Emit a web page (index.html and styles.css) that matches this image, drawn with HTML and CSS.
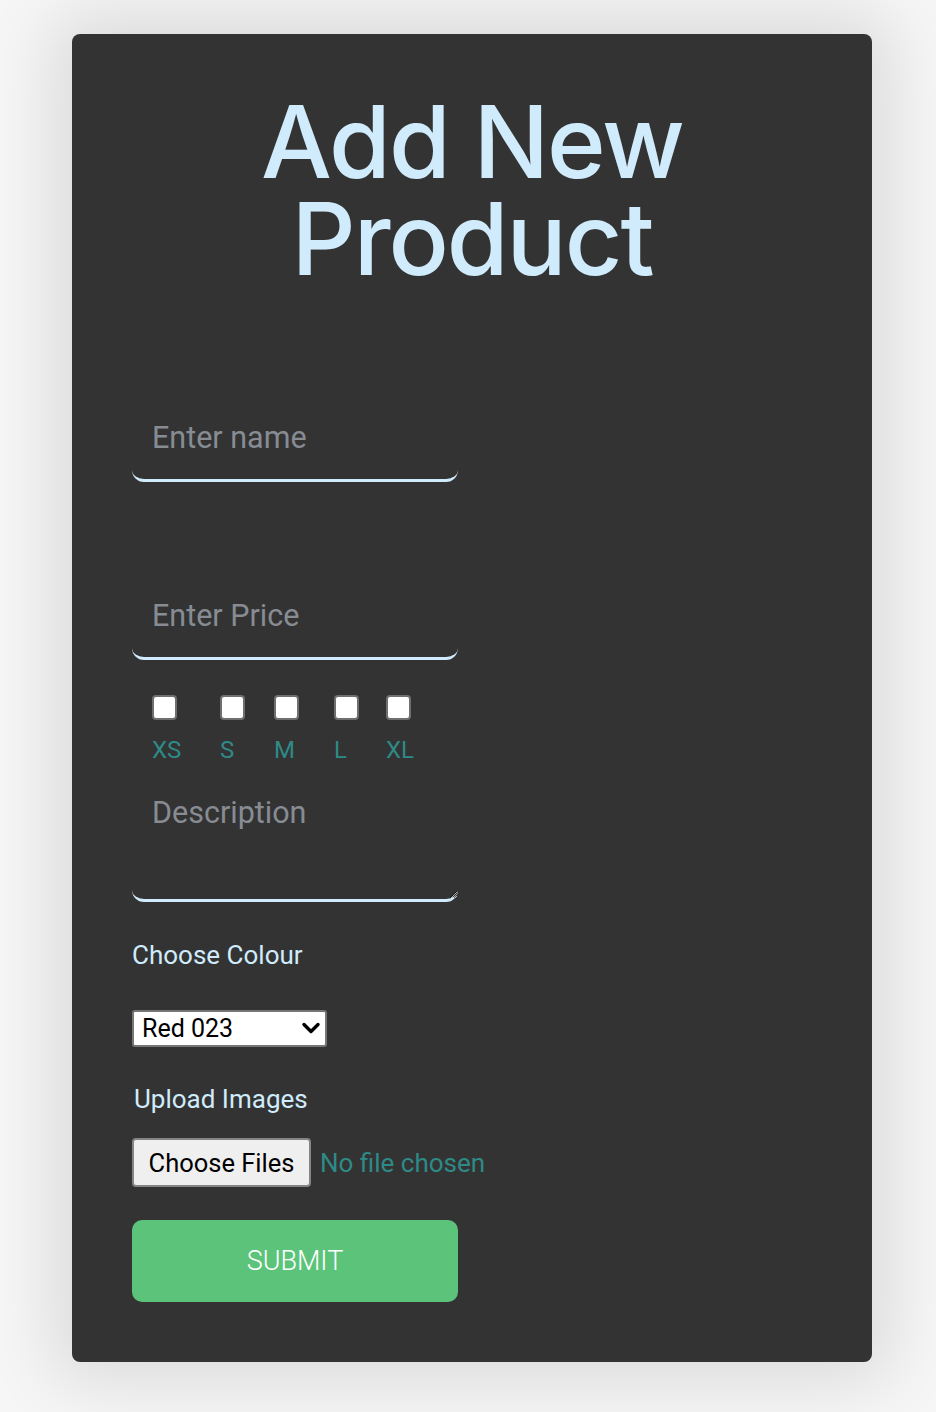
FILE: index.html
```html
<!DOCTYPE html>
<html lang="en">
<head>
<meta charset="utf-8">
<title>Add New Product</title>
<link rel="stylesheet" href="styles.css">
</head>
<body>
<main class="card">
  <h1 class="title">Add New<br>Product</h1>
  <form class="form">
    <input class="field field-name" type="text" placeholder="Enter name">
    <input class="field field-price" type="text" placeholder="Enter Price">
    <div class="sizes">
      <label class="size size-xs"><input class="check" type="checkbox"><span>XS</span></label>
      <label class="size size-s"><input class="check" type="checkbox"><span>S</span></label>
      <label class="size size-m"><input class="check" type="checkbox"><span>M</span></label>
      <label class="size size-l"><input class="check" type="checkbox"><span>L</span></label>
      <label class="size size-xl"><input class="check" type="checkbox"><span>XL</span></label>
    </div>
    <textarea class="field field-desc" placeholder="Description"></textarea>
    <label class="label label-colour">Choose Colour</label>
    <div class="select-wrap">
      <select class="select">
        <option>Red 023</option>
        <option>Blue 011</option>
        <option>Green 042</option>
      </select>
      <svg class="chevron" width="20" height="14" viewBox="0 0 20 14"><path d="M3 3.5 L10 10.5 L17 3.5" fill="none" stroke="#000" stroke-width="3.4" stroke-linecap="round" stroke-linejoin="round"/></svg>
    </div>
    <label class="label label-upload">Upload Images</label>
    <div class="file-row">
      <button type="button" class="file-btn">Choose Files</button>
      <span class="file-status">No file chosen</span>
    </div>
    <button type="button" class="submit">SUBMIT</button>
  </form>
</main>
</body>
</html>
```
FILE: styles.css
```css
html, body {
  margin: 0;
  padding: 0;
}
body {
  background: #f6f6f6;
  font-family: Roboto, "Liberation Sans", sans-serif;
  padding: 34px 0 50px;
}
.card {
  width: 800px;
  margin: 0 0 0 72px;
  box-sizing: border-box;
  background: #333333;
  border-radius: 8px;
  padding: 0 60px 60px;
  box-shadow: 0 0 70px 20px rgba(0, 0, 0, 0.11);
}
.title {
  margin: 0;
  padding-top: 59px;
  text-align: center;
  color: #d0ebfb;
  font-family: Inter, "Open Sans", sans-serif;
  font-weight: 500;
  font-size: 100px;
  line-height: 97px;
  letter-spacing: -2px;
}
.form {
  display: flex;
  flex-direction: column;
  align-items: flex-start;
}
.field {
  display: block;
  width: 326px;
  box-sizing: border-box;
  background: transparent;
  border: none;
  border-bottom: 3px solid #d0ebfb;
  border-radius: 0 0 12px 12px;
  outline: none;
  color: #d0ebfb;
  font-family: Roboto, sans-serif;
  font-size: 30.5px;
  padding: 0 20px;
}
.field::placeholder {
  color: #878c93;
}
.field-name {
  margin-top: 108px;
  height: 87px;
}
.field-price {
  margin-top: 91px;
  height: 87px;
}
.sizes {
  display: flex;
  margin-top: 35px;
  padding-left: 20px;
}
.size {
  display: flex;
  flex-direction: column;
  align-items: flex-start;
  color: #2e8a87;
  font-size: 24px;
  line-height: 28px;
}
.size-xs { width: 68px; }
.size-s { width: 54px; }
.size-m { width: 60px; }
.size-l { width: 52px; }
.size span {
  margin-top: 16px;
}
.check {
  -webkit-appearance: none;
  appearance: none;
  margin: 0;
  width: 25px;
  height: 25px;
  box-sizing: border-box;
  background: #ffffff;
  border: 2px solid #6f6f6f;
  border-radius: 4px;
}
.field-desc {
  margin-top: 20px;
  height: 118px;
  padding-top: 12px;
  resize: vertical;
  line-height: 34px;
}
.label {
  color: #d0ebfb;
  font-size: 26px;
  line-height: 30px;
}
.label-colour {
  margin-top: 38px;
}
.select-wrap {
  position: relative;
  margin-top: 40px;
}
.select {
  -webkit-appearance: none;
  appearance: none;
  display: block;
  width: 195px;
  height: 37px;
  box-sizing: border-box;
  background: #ffffff;
  border: 2px solid #767676;
  border-radius: 3px;
  font-family: Roboto, sans-serif;
  font-size: 25px;
  color: #000;
  padding: 0 0 0 8px;
}
.chevron {
  position: absolute;
  right: 6px;
  top: 11px;
  pointer-events: none;
}
.label-upload {
  margin-top: 37px;
  padding-left: 2px;
}
.file-row {
  display: flex;
  align-items: center;
  margin-top: 24px;
  gap: 9px;
}
.file-btn {
  height: 49px;
  width: 179px;
  box-sizing: border-box;
  background: #efefef;
  border: 2px solid #858585;
  border-radius: 4px;
  font-family: Roboto, sans-serif;
  font-size: 25.5px;
  color: #000;
  padding: 0;
}
.file-status {
  color: #2e8a87;
  font-size: 26px;
}
.submit {
  margin-top: 33px;
  width: 326px;
  height: 82px;
  border: none;
  border-radius: 10px;
  background: #5cc47a;
  color: #ffffff;
  font-family: Roboto, sans-serif;
  font-weight: 300;
  font-size: 27px;
}
```
